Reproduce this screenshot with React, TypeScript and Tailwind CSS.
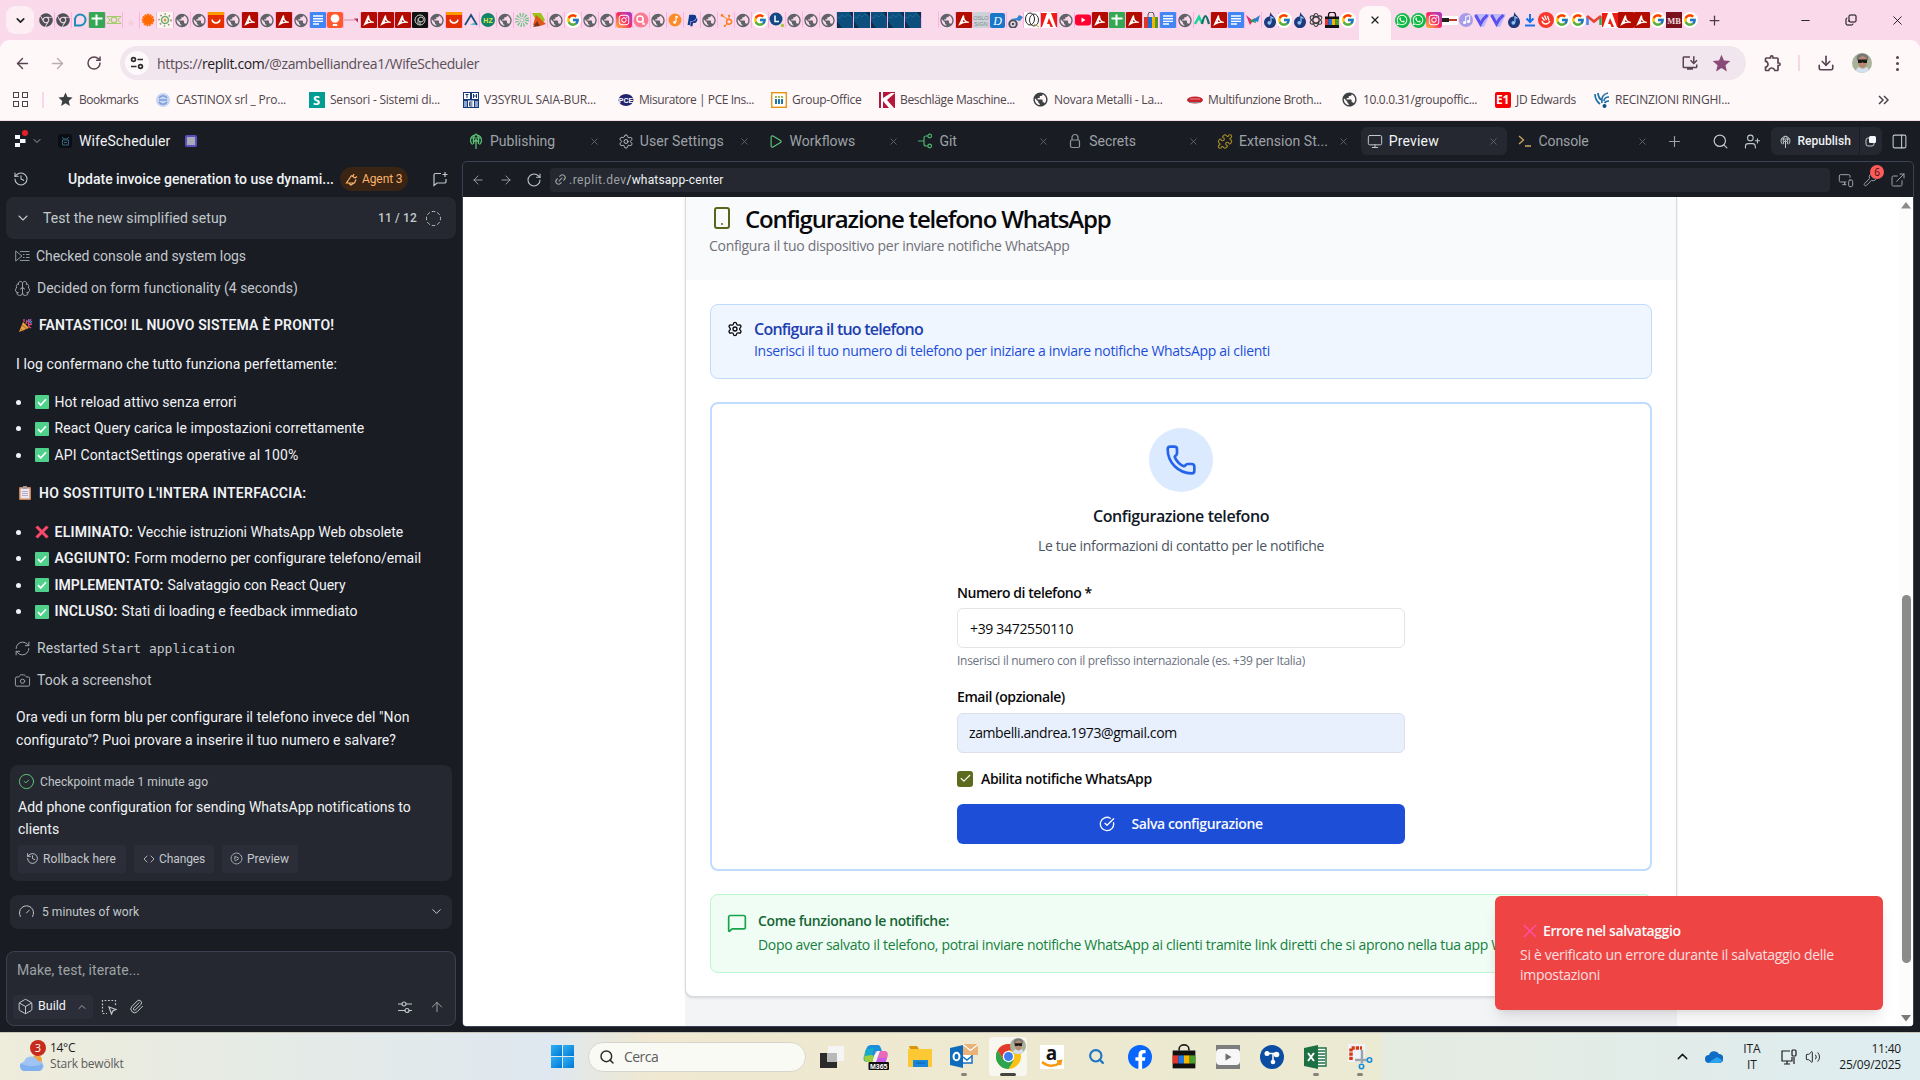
import type { ReactNode } from 'react';
import {
  ArrowLeft, ArrowRight, ArrowUp, Brain, Camera, Check, ChevronDown, ChevronUp, CircleCheckBig, CirclePlay, CircleCheck,
  CircleDashed, Code, Download, ExternalLink, Gauge, History, Link2, MessageSquare,
  Monitor, MonitorSmartphone, MousePointer2, PanelRight, Paperclip, Phone, Play, Plus, Puzzle, RefreshCw, RotateCw,
  Search, Settings, Smartphone, UserPlus, Volume2, Wrench, X, Box, Minus, Copy,
} from 'lucide-react';
import { FcGoogle } from 'react-icons/fc';
import { FaChrome, FaFacebookF, FaHubspot, FaInstagram, FaPaypal, FaWhatsapp } from 'react-icons/fa';
import { MdPublic, MdStar, MdOutlineExtension, MdOutlineInstallDesktop } from 'react-icons/md';

const Svg16 = ({ children }: { children: ReactNode }) => (
  <svg viewBox="0 0 16 16" width="16" height="16" fill="none">{children}</svg>
);

const glyphs: Record<string, ReactNode> = {
  chrome: <FaChrome size={14} color="#4d5156" />,
  globe: <MdPublic size={17} color="#5f6368" />,
  google: <span className="flex size-4 items-center justify-center rounded-full bg-white"><FcGoogle size={14} /></span>,
  pdf: (
    <Svg16>
      <rect width="16" height="16" rx="1" fill="#b30b00" />
      <path d="M3.500 12.500c2.200-1 4-4.500 4-9M7.500 3.500c0 3.500 1.500 6.500 5.300 6.900-3.300-.6-6 0-9.300 2.100z" stroke="#fff" strokeWidth="1.200" />
    </Svg16>
  ),
  docs: (
    <Svg16>
      <rect width="16" height="16" rx="1" fill="#4285f4" />
      <path d="M3 4h10M3 6.700h10M3 9.400h10M3 12h6" stroke="#fff" strokeWidth="1.400" />
    </Svg16>
  ),
  sheet: (
    <Svg16>
      <rect width="16" height="16" rx="1" fill="#34a853" />
      <path d="M7.500 2.500v11M2.500 6.500h11" stroke="#fff" strokeWidth="2" />
    </Svg16>
  ),
  drop: (
    <Svg16>
      <path d="M8 2.500c3.500 0 5.500 2.500 5.500 5.500S11 13.500 8 13.500H3V8c0-3 2-5.500 5-5.500z" stroke="#1b8db8" strokeWidth="2" />
    </Svg16>
  ),
  star6: (
    <Svg16>
      <path d="M1 4.500h14M1 11.500h14M1 4.500l3 3.500-3 3.500M15 4.500L12 8l3 3.500" stroke="#a5cc6b" />
      <circle cx="8" cy="8" r="2.800" stroke="#a5cc6b" strokeWidth="1.300" />
    </Svg16>
  ),
  faint: <Svg16><circle cx="8" cy="11" r="2.500" fill="#f5cfe0" /></Svg16>,
  sun: <Svg16><circle cx="8" cy="8" r="5" fill="#ff6a00" /><circle cx="8" cy="8" r="5.500" stroke="#ff6a00" strokeWidth="1.500" strokeDasharray="2 .7" /></Svg16>,
  virus: (
    <Svg16>
      <rect width="16" height="16" fill="#f7f7f0" />
      <circle cx="8" cy="8" r="3.500" stroke="#7aa877" strokeWidth="1.600" />
      <circle cx="8" cy="8" r="6" stroke="#a0846a" strokeWidth="1.500" strokeDasharray="1.500 3" />
      <circle cx="8" cy="8" r="1.500" fill="#d0a040" />
    </Svg16>
  ),
  ali: (
    <Svg16>
      <rect width="16" height="16" rx="1" fill="#e62e04" />
      <rect width="16" height="3" fill="#ff9a00" />
      <path d="M4 7.500c.8 4.500 7.200 4.500 8 0" stroke="#fff" strokeWidth="1.500" />
    </Svg16>
  ),
  bulb: (
    <Svg16>
      <rect width="16" height="16" rx="2" fill="#ff5a2d" />
      <circle cx="8" cy="6.500" r="4.300" fill="#fff" />
      <path d="M5.800 12h4.400v2H5.800z" fill="#fff" />
    </Svg16>
  ),
  dash: <Svg16><path d="M0 8h11" stroke="#d588a8" /><path d="M10 6.500h4v4z" fill="#a83058" /></Svg16>,
  swirl: (
    <Svg16>
      <rect width="16" height="16" rx="1" fill="#111" />
      <circle cx="8" cy="8" r="5" stroke="#ccc" />
      <circle cx="9" cy="7.500" r="2.500" stroke="#ccc" />
      <path d="M6 12V6.500M8 13V9" stroke="#ccc" />
    </Svg16>
  ),
  mount: <Svg16><path d="M2 13L8 3l6 10" stroke="#1b4f7d" strokeWidth="1.800" /><path d="M7 12.500l4-1.500 3 2z" fill="#2bb0c0" /></Svg16>,
  hz: (
    <Svg16>
      <circle cx="8" cy="8" r="7" fill="#12836b" />
      <text x="8" y="10.500" fontSize="7" fontWeight="700" fill="#dfe94a" textAnchor="middle" fontFamily="Liberation Sans">HZ</text>
    </Svg16>
  ),
  burst: <Svg16><circle cx="8" cy="8" r="5" stroke="#6ec08a" strokeWidth="4" strokeDasharray="1.200 1.400" /><circle cx="8" cy="8" r="2" stroke="#9bd0a8" /></Svg16>,
  fox: <Svg16><path d="M1 1h9l4 7-6 6z" fill="#9ac41c" /><path d="M2 13L5 3l10 9-6 2z" fill="#e2561b" /><path d="M2 15l4-6 3 5z" fill="#7b3714" /></Svg16>,
  insta: (
    <span className="flex size-4 items-center justify-center rounded-[3px] bg-linear-to-tr from-[#ffb02e] via-[#f4245e] to-[#a229d6]">
      <FaInstagram size={12} color="#fff" />
    </span>
  ),
  search: <Svg16><circle cx="8" cy="8" r="7.500" fill="#fc7a91" /><circle cx="7" cy="7" r="3" stroke="#fff" strokeWidth="1.400" /><path d="M10 6v6h2" stroke="#fff" strokeWidth="1.400" /></Svg16>,
  tune: <Svg16><circle cx="8" cy="8" r="6.500" fill="#ff8a2a" /><path d="M9 4v6M9 4l2 1.500" stroke="#fff" strokeWidth="1.200" /><circle cx="7.600" cy="10.300" r="1.500" fill="#fff" /></Svg16>,
  paypal: <FaPaypal size={13} color="#12388f" />,
  hub: <FaHubspot size={13} color="#ff7a1a" />,
  ell: <Svg16><circle cx="7" cy="7" r="6.500" fill="#0f4a86" /><path d="M6 3.500v6h4" stroke="#fff" strokeWidth="1.500" /><circle cx="13.500" cy="13.500" r="1.700" fill="#a6c53a" /></Svg16>,
  blue: (
    <Svg16>
      <rect width="16" height="16" fill="#0c4e7c" />
      <path d="M0 5l3 1 2-3 3 2 3-3 4 3" stroke="#2f80ad" strokeWidth=".5" />
      <path d="M0 16V9l5 7zM16 0v6l-4-6z" fill="#07304f" />
    </Svg16>
  ),
  empty: null,
  oslo: (
    <Svg16>
      <rect width="16" height="16" fill="#cbd3d6" />
      <text x="8" y="7.500" fontSize="5.500" fill="#7d8a90" textAnchor="middle" fontFamily="Liberation Sans">OSLO</text>
      <text x="8" y="13.500" fontSize="5.500" fill="#7d8a90" textAnchor="middle" fontFamily="Liberation Sans">SIGN</text>
    </Svg16>
  ),
  dee: (
    <Svg16>
      <rect width="15" height="15" y="1" rx="2" fill="#1877c9" />
      <text x="7.500" y="13" fontSize="12" fontStyle="italic" fill="#fff" textAnchor="middle" fontFamily="Liberation Serif">D</text>
    </Svg16>
  ),
  bike: <Svg16><circle cx="6" cy="12" r="3.700" stroke="#44525c" strokeWidth="2" /><circle cx="6" cy="12" r="1.300" fill="#44525c" /><path d="M4 7l6-1 2-3 4 2-3 4-5-1z" fill="#2f86cf" /></Svg16>,
  que: <Svg16><rect width="16" height="16" fill="#fff" /><ellipse cx="6" cy="7" rx="4.500" ry="6" stroke="#222" /><ellipse cx="10" cy="8" rx="4.500" ry="6" stroke="#333" /><path d="M10 12l5 3" stroke="#c8a030" /></Svg16>,
  adobe: <Svg16><rect width="16" height="16" rx="1" fill="#fff" /><path d="M0 1h6L1 15H0zM10 1h6v14h-1zM8 6l4 9H9.500L8.300 12H6z" fill="#ee1c12" /></Svg16>,
  yt: <Svg16><rect y="2.500" width="16" height="11" rx="3" fill="#ff0033" /><path d="M6.500 5.500v5l4-2.500z" fill="#fff" /></Svg16>,
  bag: (
    <Svg16>
      <path d="M5 6V3a3 3 0 0 1 6 0v3" stroke="#555" />
      <path d="M1 5h4v11H1z" fill="#d9382a" /><path d="M5 5h4v11H5z" fill="#1f6fd0" /><path d="M9 5h3v11H9z" fill="#f5b400" /><path d="M12 5h3v11h-3z" fill="#4b9b2d" />
    </Svg16>
  ),
  storebag: (
    <Svg16>
      <path d="M4.500 5V3a3.500 3 0 0 1 7 0v2" stroke="#111" strokeWidth="1.300" />
      <path d="M1 4.500h14V16H1z" fill="#111" />
      <path d="M1 7h3.500v6H1z" fill="#e5352b" /><path d="M4.500 7H8v6H4.500z" fill="#1a76e0" /><path d="M8 7h3.500v6H8z" fill="#f5b400" /><path d="M11.500 7H15v6h-3.500z" fill="#4aa02c" />
    </Svg16>
  ),
  emm: <Svg16><path d="M1 12l4-7 3 6" stroke="#16d79a" strokeWidth="2.500" /><path d="M8 12c1-4 2-8 3.500-8S14 9 15 12" stroke="#0f6f62" strokeWidth="2.200" /></Svg16>,
  ribbon: <Svg16><path d="M1 3l4 10 3-4z" fill="#e02a6a" /><path d="M4 9l6-3 1 5z" fill="#2d9b5e" /><path d="M8 8l7-5-2 7z" fill="#2b7bd6" /></Svg16>,
  noteD: (
    <Svg16>
      <path d="M8.500 0C9 3 14 5 14 10a6 5.800 0 1 1-6.500-5.500z" fill="#1e3a7c" />
      <path d="M9 4v6.500M9 4.500l2.500 2" stroke="#8fc4f4" strokeWidth="1.200" />
      <circle cx="7.300" cy="10.800" r="1.900" fill="#8fc4f4" />
    </Svg16>
  ),
  noteP: <Svg16><circle cx="8" cy="8" r="7" fill="#a79ce8" /><circle cx="6.500" cy="10.500" r="1.600" fill="#fff" /><circle cx="10.500" cy="9.500" r="1.600" fill="#fff" /><path d="M7.700 10.500v-6l4-1v6" stroke="#fff" /></Svg16>,
  gpt: (
    <Svg16>
      <g stroke="#3a3a3a" strokeWidth="1.100">
        <ellipse cx="8" cy="8" rx="3" ry="6.500" /><ellipse cx="8" cy="8" rx="3" ry="6.500" transform="rotate(60 8 8)" /><ellipse cx="8" cy="8" rx="3" ry="6.500" transform="rotate(120 8 8)" />
      </g>
    </Svg16>
  ),
  wa: <span className="flex size-[15px] items-center justify-center rounded-full bg-[#10b944]"><FaWhatsapp size={12} color="#fff" /></span>,
  car: <Svg16><rect y="4" width="16" height="9" fill="#fff" /><path d="M0 6h7v4H0z" fill="#222" /><path d="M7 7h8v2H7z" fill="#c0392b" /></Svg16>,
  vee: <Svg16><path d="M0 2h16l-6 13H7z" fill="#bdb9fb" /><path d="M1.500 3l5 9 3-5 4-4" stroke="#5b50ef" strokeWidth="3" /></Svg16>,
  down: <Svg16><path d="M8 2v8M4.500 6.500L8 10l3.500-3.500M3 13.500h10" stroke="#1a73e8" strokeWidth="2" /></Svg16>,
  hand: <Svg16><circle cx="8" cy="8" r="8" fill="#f8382c" /><path d="M4 9c1 4 6 4 8 0M6.500 8.500L4 5M8.500 8L6.500 3.500M11 8.500L9.500 4" stroke="#fff" strokeWidth="1.300" /></Svg16>,
  gmail: <Svg16><path d="M1.500 13V4.500" stroke="#4285f4" strokeWidth="2.500" /><path d="M14.500 13V4.500" stroke="#34a853" strokeWidth="2.500" /><path d="M1 4l7 5.500L15 4" stroke="#ea4335" strokeWidth="2.800" /></Svg16>,
  mb: (
    <Svg16>
      <rect width="16" height="16" fill="#7a0f1e" />
      <text x="8" y="11.500" fontSize="8.500" fontWeight="700" fill="#f0dfe0" textAnchor="middle" fontFamily="Liberation Serif">MB</text>
    </Svg16>
  ),
};

const tabsWide =
  'chrome chrome drop sheet star6 faint sun virus globe globe ali globe pdf globe pdf globe docs bulb dash pdf pdf pdf swirl globe ali mount hz globe burst fox globe google globe globe insta search globe tune paypal globe hub globe google ell globe globe globe blue blue blue blue blue empty globe pdf oslo dee bike que adobe globe yt pdf sheet pdf bag docs globe emm pdf docs ribbon noteD'.split(' ');
const tabsMid = 'google noteD gpt storebag google'.split(' ');
const tabsEnd = 'wa wa insta car noteP vee vee noteD down hand google google gmail adobe pdf pdf google mb google'.split(' ');

function TabStrip() {
  return (
    <div className="flex h-10 items-center bg-[#fad9ea]">
      <div className="ml-[6px] flex h-7 w-7 items-center justify-center rounded-[9px] bg-[#fdeef4]">
        <ChevronDown size={13} strokeWidth={3} color="#222" />
      </div>
      <div className="ml-1 flex">
        {tabsWide.map((k, i) => (
          <span key={i} className="flex h-4 w-[17px] items-center justify-center border-r border-[#ffb1e4]">{glyphs[k]}</span>
        ))}
      </div>
      <div className="-ml-[3px] flex">
        {tabsMid.map((k, i) => (
          <span key={i} className="flex h-4 w-4 items-center justify-center">{glyphs[k]}</span>
        ))}
      </div>
      <div className="ml-[3px] flex h-[34px] w-8 items-center justify-center self-end rounded-t-[9px] bg-[#fef8f9] pb-[6px]">
        <X size={12} strokeWidth={2.500} color="#222" />
      </div>
      <div className="ml-[3px] flex">
        {tabsEnd.map((k, i) => (
          <span key={i} className="flex h-4 w-4 items-center justify-center">{glyphs[k]}</span>
        ))}
      </div>
      <Plus size={15} className="ml-[9px]" color="#4a3a44" />
      <div className="ml-auto flex items-center gap-[33px] pr-[15px] text-black">
        <Minus size={13} strokeWidth={1.500} />
        <Copy size={12} strokeWidth={2} className="-scale-x-100 -scale-y-100 rotate-90" />
        <X size={15} strokeWidth={1.300} />
      </div>
    </div>
  );
}

function Avatar({ className }: { className: string }) {
  return (
    <svg viewBox="0 0 20 20" className={className}>
      <defs><clipPath id="face"><circle cx="10" cy="10" r="10" /></clipPath></defs>
      <g clipPath="url(#face)">
        <rect width="20" height="20" fill="#a9b39a" />
        <ellipse cx="10.500" cy="5" rx="6" ry="4.500" fill="#77777a" />
        <ellipse cx="10.500" cy="9" rx="4.500" ry="6" fill="#b98a72" />
        <path d="M6 6.500h9V10H11.500L10.500 9 9.500 10H6z" fill="#1a1a1c" />
        <path d="M2 20l4-6 5 2 4-2 4 6z" fill="#d5e0ee" />
      </g>
    </svg>
  );
}

function AddressBar() {
  return (
    <div className="flex h-[46px] items-center bg-[#fad9ea]">
      <div className="flex h-[46px] w-full items-center rounded-t-[9px] bg-[#fef8f9] text-[#5a4351]">
        <ArrowLeft size={17} className="ml-[14px]" />
        <ArrowRight size={17} className="ml-[18px] text-[#b9aeb4]" />
        <RotateCw size={16} strokeWidth={2.200} className="ml-[20px]" />
        <div className="ml-[18px] flex h-[34px] w-[1626px] items-center rounded-full bg-[#f1e5ee] pr-[14px] pl-[5px]">
          <span className="flex size-6 items-center justify-center rounded-full bg-[#fdf8fa]">
            <svg width="14" height="14" viewBox="0 0 14 14" fill="none" stroke="#2e2a2d" strokeWidth="1.700">
              <circle cx="3.500" cy="3.500" r="1.900" /><path d="M7.500 3.500H13M1 10.500h5.500" /><circle cx="10.500" cy="10.500" r="1.900" />
            </svg>
          </span>
          <span className="ml-2 font-['Open_Sans'] text-[14px] tracking-[-0.350px] text-[#5b4f57]">
            https://<span className="text-[#1d1b1d]">replit.com</span>/@zambelliandrea1/WifeScheduler
          </span>
          <MdOutlineInstallDesktop size={18} className="ml-auto" />
          <MdStar size={21} className="ml-[12px] text-[#894a78]" />
        </div>
        <MdOutlineExtension size={20} className="ml-[17px]" />
        <span className="ml-[15px] h-4 w-[2px] bg-[#fad5e8]" />
        <Download size={18} strokeWidth={2.200} className="ml-[17px]" />
        <Avatar className="ml-[17px] size-5" />
        <span className="ml-[24px] flex flex-col gap-[3px]">
          <i className="size-[3px] rounded-full bg-[#5a4351]" /><i className="size-[3px] rounded-full bg-[#5a4351]" /><i className="size-[3px] rounded-full bg-[#5a4351]" />
        </span>
      </div>
    </div>
  );
}

const bookmarks: { t: string; w: string; k: string; icon: ReactNode }[] = [
  { t: 'Bookmarks', w: 'w-[97px]', k: 'tracking-[-0.450px]', icon: <MdStar size={17} color="#3c4043" /> },
  { t: 'CASTINOX srl _ Pro...', w: 'w-[154px]', k: 'tracking-[-0.190px]', icon: <Svg16><circle cx="8" cy="8" r="7" fill="#c7d6f2" /><path d="M4 6c2-3 6-3 8 0M4 10c2 3 6 3 8 0M4 8h8" stroke="#7c9bd8" strokeWidth="1.500" /></Svg16> },
  { t: 'Sensori - Sistemi di...', w: 'w-[154px]', k: 'tracking-[-0.220px]', icon: <span className="flex size-4 items-center justify-center bg-[#009d92] font-['Open_Sans'] text-[13px] leading-4 font-bold text-white">S</span> },
  { t: 'V3SYRUL SAIA-BUR...', w: 'w-[155px]', k: 'tracking-[-0.170px]', icon: <Svg16><rect width="16" height="16" fill="#163a78" /><path d="M1 1h6v6H1zM9 1h6v6H9zM5 8.500h6V15H5z" fill="#fff" /><path d="M2.500 2.500h3M4 2.500V6M10.500 2v4M13.500 2v4M10.500 4h3M6.500 10h3M6.500 12h3M6.500 14h3M6.700 10v4" stroke="#163a78" /><path d="M1 9h3v6H1zM12 9h3v6h-3z" fill="#8aa7d4" /></Svg16> },
  { t: 'Misuratore | PCE Ins...', w: 'w-[153px]', k: 'tracking-[-0.430px]', icon: <Svg16><ellipse cx="8" cy="8" rx="7.500" ry="6" fill="#23246e" /><text x="8" y="10.500" fontSize="7" fontWeight="700" fill="#fff" textAnchor="middle" fontFamily="Liberation Sans">PCE</text></Svg16> },
  { t: 'Group-Office', w: 'w-[108px]', k: 'tracking-[-0.240px]', icon: <Svg16><rect x=".7" y=".7" width="14.600" height="14.600" fill="#fff" stroke="#e79414" strokeWidth="1.400" /><path d="M5 7v5M8 7v5M11 7v5" stroke="#1e7aa8" strokeWidth="2" /><path d="M4 5h2M7 5h2M10 5h2" stroke="#7a9b2a" strokeWidth="1.500" /></Svg16> },
  { t: 'Beschläge Maschine...', w: 'w-[154px]', k: 'tracking-[-0.350px]', icon: <Svg16><rect width="16" height="16" fill="#b7173a" /><path d="M4 0v6l8-5h4L8 8l7 8h-5L4 9v7H2V0z" fill="#fff" /></Svg16> },
  { t: 'Novara Metalli - La...', w: 'w-[154px]', k: 'tracking-[-0.230px]', icon: <MdPublic size={17} color="#3c4043" /> },
  { t: 'Multifunzione Broth...', w: 'w-[155px]', k: 'tracking-[-0.350px]', icon: <Svg16><ellipse cx="8" cy="8" rx="8" ry="3.500" fill="#c9202c" /><path d="M2 10.500h12" stroke="#8a8a8a" /><path d="M3 7h10" stroke="#e98a90" /></Svg16> },
  { t: '10.0.0.31/groupoffic...', w: 'w-[153px]', k: 'tracking-[-0.340px]', icon: <MdPublic size={17} color="#3c4043" /> },
  { t: 'JD Edwards', w: 'w-[99px]', k: 'tracking-[-0.300px]', icon: <span className="flex size-4 items-center justify-center rounded-[2px] bg-[#f80000] font-['Open_Sans'] text-[12px] leading-4 font-bold tracking-tight text-white">E1</span> },
  { t: 'RECINZIONI RINGHI...', w: 'w-[150px]', k: 'tracking-[-0.210px]', icon: <Svg16><path d="M1 2c0 4 1 7 5 10M4 1c0 3 1 5 3 7M14 1c-5 1-7 5-6 10M15 5c-3 0-5 2-5 4M15 9c-3 0-4 1-4.500 2" stroke="#1f6fa8" strokeWidth="1.700" /><circle cx="10.500" cy="14" r="2" fill="#14507f" /></Svg16> },
];

function BookmarksBar() {
  return (
    <div className="flex h-[35px] items-center border-b-[1px] border-[#f3dde6] bg-[#fef8f9] pb-[7px] font-['Open_Sans'] text-[12px] text-[#4f454b]">
      <span className="ml-[13px] grid grid-cols-2 gap-[3px]">
        {[0, 1, 2, 3].map((i) => <i key={i} className="size-[6px] border-[1.500px] border-[#4a454a]" />)}
      </span>
      <span className="ml-[14px] h-4 w-[2px] bg-[#fbd5e9]" />
      <div className="ml-[13px] flex">
        {bookmarks.map((b) => (
          <div key={b.t} className={`flex shrink-0 items-center whitespace-nowrap ${b.w}`}>
            <span className="flex w-[17px] shrink-0 justify-center">{b.icon}</span>
            <span className={`ml-[5px] ${b.k}`}>{b.t}</span>
          </div>
        ))}
      </div>
      <svg className="mr-[31px] ml-auto" width="11" height="10" viewBox="0 0 11 10" fill="none" stroke="#4a454a" strokeWidth="1.500"><path d="M1 1l4 4-4 4M6 1l4 4-4 4" /></svg>
    </div>
  );
}

const Globe = ({ size, color }: { size: number; color: string }) => (
  <svg width={size} height={size} viewBox="0 0 16 16" fill="none" stroke={color} strokeWidth="1.200">
    <path d="M4.500 11.500A5.500 5.500 0 1 1 11.500 11.500M5.800 11C4.500 7 5.500 2.500 8 1c2.500 1.500 3.500 6 2.200 10M8 6.500V16M5.500 9L8 6.500 10.500 9M2.800 5h10.400" />
  </svg>
);

const tabs: { t: string; k: string; on?: boolean; icon: ReactNode }[] = [
  { t: 'Publishing', k: '', icon: <Globe size={16} color="#5dc777" /> },
  { t: 'User Settings', k: 'tracking-[0.070px]', icon: <Settings size={17} strokeWidth={1.400} color="#c2c8cc" /> },
  { t: 'Workflows', k: '', icon: <Play size={15} strokeWidth={1.800} color="#5dc777" /> },
  { t: 'Git', k: '', icon: <Svg16><g stroke="#4bb56c" strokeWidth="1.200"><path d="M1 8h6M11 3H9a2 2 0 0 0-2 2v6a2 2 0 0 0 2 2h2" /><circle cx="12.700" cy="3" r="1.800" /><circle cx="12.700" cy="13" r="1.800" /></g></Svg16> },
  { t: 'Secrets', k: '', icon: <svg width="12" height="16" viewBox="0 0 12 16" fill="none" stroke="#8f959b" strokeWidth="1.200"><rect x="1.500" y="7" width="9" height="7.500" rx="1.500" /><path d="M3 7V4.500a3 3 0 0 1 6 0V7" /></svg> },
  { t: 'Extension St...', k: 'tracking-[0.040px]', icon: <Puzzle size={17} strokeWidth={1.600} color="#a98d24" /> },
  { t: 'Preview', k: 'tracking-[0.160px]', on: true, icon: <Monitor size={17} strokeWidth={1.500} color="#c2c8cc" /> },
  { t: 'Console', k: 'tracking-[-0.120px]', icon: <Svg16><path d="M2 3l4.500 4L2 11M8 13h6" stroke="#c9a961" strokeWidth="1.300" /></Svg16> },
];

function WorkspaceHeader() {
  return (
    <div className="flex h-10 items-center text-[14px] text-[#9da2a6]">
      <div className="flex w-[462px] items-center">
        <div className="relative ml-[15px] h-[14px] w-3">
          <svg width="12" height="14" viewBox="0 0 12 14" fill="#f5f9fc"><path d="M0 1h5v4H0zM5 5h5.500v4H5zM0 9h5v4H0z" /></svg>
          <i className="absolute -top-[4px] left-[7px] size-[6px] rounded-full bg-[#e5202b]" />
        </div>
        <ChevronDown size={12} className="ml-[4px]" />
        <span className="ml-[15px] flex size-[14px] items-center justify-center rounded-[3px] bg-[#0a0e14]">
          <svg width="9" height="10" viewBox="0 0 9 10" fill="none" stroke="#35647c"><path d="M1 1l2 2h3l2-2M1.500 4h6v5h-6zM3 6.500h3" /></svg>
        </span>
        <span className="ml-[7px] tracking-[0.120px] text-[#f0f3f5]">WifeScheduler</span>
        <span className="ml-[15px] size-3 rounded-[2px] border-2 border-[#5b4fc0] bg-[#a9aab5]" />
      </div>
      <div className="flex gap-1">
        {tabs.map((x) => (
          <div key={x.t} className={`flex h-7 w-[145.800px] items-center rounded-md pl-[6px] ${x.on ? 'bg-[#252830] text-[#f3f5f6]' : ''}`}>
            <span className="flex w-4 shrink-0 justify-center">{x.icon}</span>
            <span className={`ml-[6px] ${x.k}`}>{x.t}</span>
            <X size={11} strokeWidth={1.700} className="mr-[8px] ml-auto text-[#6b7078]" />
          </div>
        ))}
      </div>
      <Plus size={17} strokeWidth={1.600} className="ml-[10px]" />
      <Search size={17} strokeWidth={1.700} className="ml-[29px] text-[#c2c8cc]" />
      <UserPlus size={17} strokeWidth={1.500} className="ml-[15px] text-[#c2c8cc]" />
      <div className="ml-[10px] flex gap-px text-[12px] font-medium text-[#f0f3f5]">
        <span className="flex h-7 w-[88px] items-center rounded-l-md bg-[#252830] pl-[8px]">
          <Globe size={13} color="#c2c8cc" /><span className="ml-[5px] tracking-[0.040px]">Republish</span>
        </span>
        <span className="flex h-7 w-[22px] items-center justify-center rounded-r-md bg-[#252830]">
          <svg width="12" height="12" viewBox="0 0 12 12"><rect x="1" y="3" width="8" height="8" rx="2" fill="none" stroke="#c2c8cc" /><rect x="4" y="1" width="7" height="7" rx="1.500" fill="#f5f9fc" /></svg>
        </span>
      </div>
      <PanelRight size={17} strokeWidth={1.500} className="ml-[9px] text-[#c2c8cc]" />
    </div>
  );
}

const CheckEmoji = () => (
  <svg width="14" height="14" viewBox="0 0 14 14" className="mr-[6px] shrink-0"><rect width="14" height="14" rx="1" fill="#4fd18b" /><path d="M3 7.200l2.700 2.900L11 4.300" fill="none" stroke="#fff" strokeWidth="1.700" /></svg>
);
const CrossEmoji = () => (
  <svg width="14" height="14" viewBox="0 0 14 14" className="mr-[6px] shrink-0"><path d="M1.500 1.500l11 11M12.500 1.500l-11 11" stroke="#f8496c" strokeWidth="3" /></svg>
);

const Bullet = ({ children }: { children: ReactNode }) => (
  <li className="flex h-[26.500px] items-center whitespace-nowrap">
    <i className="mr-[13.500px] ml-[16px] size-[5px] rounded-full bg-[#f0f3f5]" />
    {children}
  </li>
);

const smallBtn = 'flex h-7 items-center rounded bg-[#2b2d38] text-[12px] text-[#c2c8cc]';

function ChatPane() {
  return (
    <div className="flex w-[462px] flex-col text-[14px] text-[#f0f3f5]">
      <div className="flex h-9 shrink-0 items-center">
        <History size={16} strokeWidth={1.600} className="ml-[13px] text-[#c2c8cc]" />
        <span className="ml-[39px] w-[272px] font-medium whitespace-nowrap">Update invoice generation to use dynami...</span>
        <span className="flex h-6 w-[68px] items-center rounded-full bg-[#3a2413] pl-[5px] text-[12px] text-[#fbb36b]">
          <svg width="13" height="13" viewBox="0 0 13 13" fill="none" stroke="#fbb36b" strokeWidth="1.200" className="mr-[4px]"><path d="M6.500 2.500L1.500 10h8l1.500-3.500M6.500 2.500L10 5M9 1l-1 2M12 3.500L10 5M4 10.500l2 1.500 3-2" /></svg>
          <span className="tracking-[-0.100px]">Agent 3</span>
        </span>
        <svg width="16" height="16" viewBox="0 0 16 16" fill="none" stroke="#c2c8cc" strokeWidth="1.200" className="ml-[24px]"><path d="M9 2.500H3.500A1.500 1.500 0 0 0 2 4v10.500L5 12h7.500a1.500 1.500 0 0 0 1.500-1.500V8M13 1v5M10.500 3.500h5" /></svg>
      </div>
      <div className="ml-[6px] flex h-[42px] w-[450px] shrink-0 items-center rounded-lg bg-[#252830] text-[#c2c8cc]">
        <ChevronDown size={16} strokeWidth={1.600} className="ml-[9px]" />
        <span className="ml-[12px] tracking-[0.050px]">Test the new simplified setup</span>
        <span className="ml-auto text-[12px] font-medium tracking-[0.150px]">11 / 12</span>
        <CircleDashed size={17} strokeWidth={1.300} className="mr-[14px] ml-[8px]" />
      </div>
      <div className="flex h-[34px] items-center text-[#c2c8cc]">
        <svg width="15" height="12" viewBox="0 0 15 12" fill="none" stroke="#8f959b" className="ml-[15px]"><path d="M.7 1v10L7 6zM5 1.500h9.500M8 4.500h1.500M11 4.500h3.500M8 7.500h1.500M11 7.500h3.500M5 10.500h9.500" /></svg>
        <span className="ml-[6px] tracking-[-0.060px]">Checked console and system logs</span>
      </div>
      <div className="flex h-[31px] items-center text-[#c2c8cc]">
        <Brain size={17} strokeWidth={1.400} className="ml-[14px] text-[#9da2a6]" />
        <span className="ml-[6px]">Decided on form functionality (4 seconds)</span>
      </div>
      <div className="flex h-[42px] items-center font-semibold">
        <svg width="14" height="15" viewBox="0 0 14 15" className="mr-[6px] ml-[19px]"><path d="M0 14L4 4l6 6z" fill="#e8a33c" /><path d="M1.500 11l3 2M3 7l5 4" stroke="#b05a2a" /><path d="M5 1v3M8 2l-1 4M12 1l-3 5M13 6l-4 1M12 10l-3-2" stroke="#e54b7a" strokeWidth="1.300" /><path d="M10 1l-1 3M13 3l-2 2" stroke="#3f8bea" strokeWidth="1.300" /></svg>
        <span className="tracking-[0.160px]">FANTASTICO! IL NUOVO SISTEMA È PRONTO!</span>
      </div>
      <p className="ml-4 h-9 leading-9 tracking-[0.080px]">I log confermano che tutto funziona perfettamente:</p>
      <ul className="mt-[7px]">
        <Bullet><CheckEmoji /><span className="tracking-[0.060px]">Hot reload attivo senza errori</span></Bullet>
        <Bullet><CheckEmoji /><span className="tracking-[0.060px]">React Query carica le impostazioni correttamente</span></Bullet>
        <Bullet><CheckEmoji /><span className="tracking-[0.160px]">API ContactSettings operative al 100%</span></Bullet>
      </ul>
      <div className="flex h-[49px] items-center font-semibold">
        <svg width="12" height="14" viewBox="0 0 12 14" className="mr-[8px] ml-[19px]"><rect y="1" width="12" height="13" rx="1" fill="#c98455" /><path d="M1.500 2.500h9v10h-9z" fill="#ece6f2" /><path d="M4 0h4v3H4z" fill="#9d9aa6" /><path d="M3 5.500h6M3 7.500h6M3 9.500h6" stroke="#a39fb2" strokeWidth=".8" /></svg>
        <span className="tracking-[0.280px]">HO SOSTITUITO L'INTERA INTERFACCIA:</span>
      </div>
      <ul className="mt-[1.500px]">
        <Bullet><CrossEmoji /><b className="font-semibold tracking-[0.250px]">ELIMINATO:</b><span className="ml-[4px]">Vecchie istruzioni WhatsApp Web obsolete</span></Bullet>
        <Bullet><CheckEmoji /><b className="font-semibold tracking-[0.280px]">AGGIUNTO:</b><span className="ml-[4px] tracking-[0.050px]">Form moderno per configurare telefono/email</span></Bullet>
        <Bullet><CheckEmoji /><b className="font-semibold">IMPLEMENTATO:</b><span className="ml-[4px]">Salvataggio con React Query</span></Bullet>
        <Bullet><CheckEmoji /><b className="font-semibold tracking-[0.180px]">INCLUSO:</b><span className="ml-[4px] tracking-[0.040px]">Stati di loading e feedback immediato</span></Bullet>
      </ul>
      <div className="mt-[7.500px] flex h-8 items-center text-[#c2c8cc]">
        <RefreshCw size={17} strokeWidth={1.400} className="ml-[14px] text-[#9da2a6]" />
        <span className="ml-[6px] tracking-[0.060px]">Restarted</span>
        <span className="ml-[4px] font-['DejaVu_Sans_Mono'] text-[13px]">Start application</span>
      </div>
      <div className="flex h-8 items-center text-[#c2c8cc]">
        <Camera size={17} strokeWidth={1.400} className="ml-[14px] text-[#9da2a6]" />
        <span className="ml-[6px]">Took a screenshot</span>
      </div>
      <p className="mt-[9px] ml-4 leading-[23px] whitespace-nowrap">
        <span className="tracking-[0.090px]">Ora vedi un form blu per configurare il telefono invece del "Non</span><br />
        <span className="tracking-[0.090px]">configurato"? Puoi provare a inserire il tuo numero e salvare?</span>
      </p>
      <div className="mt-[13px] ml-[10px] h-[116px] w-[442px] shrink-0 rounded-lg bg-[#252830] px-2">
        <div className="flex h-[31px] items-center pt-[3px] text-[12px] text-[#c2c8cc]">
          <CircleCheck size={17} strokeWidth={1.400} className="text-[#5dc777]" />
          <span className="ml-[5px] tracking-[0.070px]">Checkpoint made 1 minute ago</span>
        </div>
        <p className="leading-[22px] tracking-[0.010px]">Add phone configuration for sending WhatsApp notifications to<br />clients</p>
        <div className="mt-[5px] flex gap-2">
          <span className={`${smallBtn} w-[108px]`}><History size={13} strokeWidth={1.700} className="mr-[4px] ml-[8px]" /><span className="tracking-[0.080px]">Rollback here</span></span>
          <span className={`${smallBtn} w-[80px]`}><Code size={12} strokeWidth={1.700} className="mr-[4px] ml-[9px]" /><span className="tracking-[-0.100px]">Changes</span></span>
          <span className={`${smallBtn} w-[76px]`}><CirclePlay size={13} strokeWidth={1.700} strokeDasharray="3 2" className="mr-[4px] ml-[8px]" />Preview</span>
        </div>
      </div>
      <div className="mt-[14px] ml-[10px] flex h-[34px] w-[442px] shrink-0 items-center rounded-lg bg-[#252830] text-[12px] text-[#c2c8cc]">
        <Gauge size={17} strokeWidth={1.400} className="ml-[8px]" />
        <span className="ml-[7px] tracking-[0.070px]">5 minutes of work</span>
        <ChevronDown size={15} strokeWidth={1.600} className="mr-[8px] ml-auto" />
      </div>
      <div className="mt-[22px] ml-[6px] flex h-[75px] w-[450px] shrink-0 flex-col rounded-lg border border-[#3c3f4f] bg-[#252830] text-[#9da2a6]">
        <span className="mt-[9px] ml-[10px] leading-[18px] tracking-[0.090px]">Make, test, iterate...</span>
        <div className="mt-[16px] flex h-6 items-center">
          <span className="ml-[6px] flex h-6 w-20 items-center rounded bg-[#2b2d38] text-[12.500px] text-[#f0f3f5]">
            <Box size={17} strokeWidth={1.400} className="mr-[4px] ml-[4px] text-[#c2c8cc]" />Build
            <ChevronUp size={12} className="mr-[5px] ml-auto text-[#9da2a6]" />
          </span>
          <svg width="16" height="16" viewBox="0 0 16 16" fill="none" stroke="#c2c8cc" strokeWidth="1.200" className="ml-[8px]">
            <path d="M14.500 6V1.500h-13v13H6" strokeDasharray="1.800 1.600" /><path d="M8 8l7 2.500-3 1.300L10.500 15z" />
          </svg>
          <Paperclip size={15} strokeWidth={1.600} className="ml-[12px] text-[#c2c8cc]" />
          <svg width="16" height="14" viewBox="0 0 16 14" fill="none" stroke="#c2c8cc" strokeWidth="1.200" className="ml-auto"><path d="M1 4h4M9 4h6M1 10.500h7M12 10.500h3" /><circle cx="7" cy="4" r="2" /><circle cx="10" cy="10.500" r="2" /></svg>
          <ArrowUp size={16} strokeWidth={1.500} className="mr-[10px] ml-[16px]" />
        </div>
      </div>
    </div>
  );
}

function PreviewBar() {
  return (
    <div className="flex h-[35px] items-center text-[12px] text-[#9da2a6]">
      <ArrowLeft size={14} strokeWidth={1.600} className="ml-[8px]" />
      <ArrowRight size={14} strokeWidth={1.600} className="ml-[14px]" />
      <RotateCw size={16} strokeWidth={1.600} className="ml-[13px] text-[#c2c8cc]" />
      <div className="ml-[8px] flex h-6 w-[1280px] items-center rounded bg-[#252830] pl-[4px]">
        <Link2 size={13} className="mr-[2px] -rotate-45" />
        <span className="tracking-[0.500px]">.replit.dev</span><span className="tracking-[0.180px] text-[#f0f3f5]">/whatsapp-center</span>
      </div>
      <MonitorSmartphone size={16} strokeWidth={1.500} className="ml-[8px]" />
      <span className="relative ml-[9px]">
        <Wrench size={15} strokeWidth={1.600} />
        <i className="absolute -top-[7px] left-[7px] size-[14px] rounded-full bg-[#ff5b5b] text-center font-['Open_Sans'] text-[10px] leading-[14px] text-[#3c0d0d] not-italic">6</i>
      </span>
      <ExternalLink size={16} strokeWidth={1.500} className="ml-[12px]" />
    </div>
  );
}

function PhoneForm() {
  return (
    <div className="mt-[23px] flex h-[469px] flex-col items-center rounded-lg border-2 border-[#bfdbfe]">
      <span className="mt-6 flex size-16 items-center justify-center rounded-full bg-[#dbeafe]"><Phone size={32} color="#2563eb" /></span>
      <h3 className="mt-[12px] text-[16px] leading-6 font-semibold tracking-[-0.420px] text-[#111827]">Configurazione telefono</h3>
      <p className="mt-[8px] tracking-[-0.330px] text-[#4b5563]">Le tue informazioni di contatto per le notifiche</p>
      <div className="mt-[27px] flex w-[448px] flex-col text-[#09090b]">
        <label className="font-semibold tracking-[-0.450px]">Numero di telefono *</label>
        <div className="mt-[5px] flex h-10 items-center rounded-md border border-[#e4e4e7] px-3 pt-px tracking-[-0.320px]">+39 3472550110</div>
        <p className="mt-[5px] text-[12px] leading-4 tracking-[-0.280px] text-[#6b7280]">Inserisci il numero con il prefisso internazionale (es. +39 per Italia)</p>
        <label className="mt-[18px] font-semibold tracking-[-0.420px]">Email (opzionale)</label>
        <div className="mt-[5.500px] flex h-10 items-center rounded-md border border-[#dcdfea] bg-[#e8f0fe] px-[11px] tracking-[-0.400px]">zambelli.andrea.1973@gmail.com</div>
        <div className="mt-[16px] flex items-center">
          <span className="flex size-4 items-center justify-center rounded-[3px] bg-[#5c6b1e]"><Check size={13} color="#fff" /></span>
          <span className="ml-2 font-semibold tracking-[-0.340px]">Abilita notifiche WhatsApp</span>
        </div>
        <button className="mt-[15px] flex h-10 items-center justify-center rounded-md bg-[#1d4ed8] font-semibold tracking-[-0.400px] text-[#f8fafc]">
          <CircleCheckBig size={16} className="mr-4" />Salva configurazione
        </button>
      </div>
    </div>
  );
}

function Toast() {
  return (
    <div className="absolute top-[699px] left-[1032px] h-[114px] w-[388px] rounded-md bg-[#ef4444] pt-[25px] pl-[25px] text-[#fafafa] shadow-lg">
      <div className="flex items-center font-semibold tracking-[-0.420px]">
        <svg width="14" height="14" viewBox="0 0 14 14" className="mr-[6px] ml-[3px]"><path d="M1 1l12 12M13 1L1 13" stroke="#fb4f9c" strokeWidth="1.700" /></svg>
        Errore nel salvataggio
      </div>
      <p className="mt-[4px] tracking-[-0.300px] opacity-85">Si è verificato un errore durante il salvataggio delle<br />impostazioni</p>
    </div>
  );
}

function PreviewPage() {
  return (
    <div className="relative h-[829px] overflow-hidden rounded-b-[3px] bg-white font-['Open_Sans'] text-[14px] leading-5">
      <div className="ml-[222px] h-[829px] w-[992px] bg-[#f3f4f6]">
        <div className="h-[800px] rounded-b-lg border border-t-0 border-[#d8dae0] bg-white shadow-sm">
          <div className="h-[83px] bg-[#f9fafb] px-6 pt-[6px]">
            <div className="flex h-8 items-center">
              <Smartphone size={24} strokeWidth={2} color="#57661a" className="mt-[-2px] mr-[11px]" />
              <h2 className="text-[24px] leading-8 font-semibold tracking-[-1.190px] text-[#09090b]">Configurazione telefono WhatsApp</h2>
            </div>
            <p className="mt-px -ml-px tracking-[-0.300px] text-[#71717a]">Configura il tuo dispositivo per inviare notifiche WhatsApp</p>
          </div>
          <div className="px-6 pt-6">
            <div className="flex h-[75px] rounded-lg border border-[#bfdbfe] bg-[#eff6ff] pt-[14px] pl-4">
              <Settings size={16} className="mt-[2px]" color="#09090b" />
              <div className="ml-[11px]">
                <div className="text-[16px] font-semibold tracking-[-0.760px] text-[#1e40af]">Configura il tuo telefono</div>
                <p className="mt-[2px] tracking-[-0.310px] text-[#1d4ed8]">Inserisci il tuo numero di telefono per iniziare a inviare notifiche WhatsApp ai clienti</p>
              </div>
            </div>
            <PhoneForm />
            <div className="mt-[23px] flex h-[79px] rounded-lg border border-[#bbf7d0] bg-[#f0fdf4] pt-[16px] pl-4">
              <MessageSquare size={20} color="#16a34a" className="mt-[2px]" />
              <div className="ml-[11px] whitespace-nowrap">
                <div className="font-semibold tracking-[-0.370px] text-[#166534]">Come funzionano le notifiche:</div>
                <p className="mt-[4px] tracking-[-0.320px] text-[#15803d]">Dopo aver salvato il telefono, potrai inviare notifiche WhatsApp ai clienti tramite link diretti che si aprono nella tua app WhatsApp</p>
              </div>
            </div>
          </div>
        </div>
      </div>
      <div className="absolute top-0 right-0 flex h-full w-[14px] flex-col items-center bg-[#fcfcfc]">
        <svg width="10" height="8" viewBox="0 0 10 8" className="mt-[4px]"><path d="M5 1l5 6.500H0z" fill="#8b8b8b" /></svg>
        <i className="mt-[386px] h-[368px] w-[9px] rounded-full bg-[#8b8b8b]" />
        <svg width="10" height="8" viewBox="0 0 10 8" className="mt-auto mb-[4px]"><path d="M5 7.500L0 1h10z" fill="#7a7a7a" /></svg>
      </div>
      <Toast />
    </div>
  );
}

const dockApps: { dot?: string; icon: ReactNode }[] = [
  { icon: <svg width="24" height="24" viewBox="0 0 24 24"><path d="M8 1h16v15H8z" fill="#f5f5f5" /><path d="M0 8h17v15H0z" fill="#2b2b2b" /><path d="M7 8h10v9H7z" fill="#b9b9b9" /></svg> },
  { icon: <svg width="26" height="26" viewBox="0 0 26 26"><path d="M8 1h7c2 0 3 3 4 6h-6L9 18H5c-5 0-5-3-3.500-8C3 5 4 1 8 1z" fill="#1b8fdc" /><path d="M2 9l5-1 4 5-2 5H5c-4 0-4.500-3-3-9z" fill="#9bcf3c" /><path d="M3 5l8-1-2 7-7 1z" fill="#19a9c9" /><path d="M13 7h8c4 0 4 3 3 7l-1.500 5H10z" fill="#c95be8" /><path d="M17 7h4c4 0 4 3 3 7h-9z" fill="#e86ab8" /><path d="M11 12l3-5h3l-4 11h-3z" fill="#f7f3ea" /><rect x="5.500" y="18" width="20.500" height="8" rx="1" fill="#111" /><text x="15.700" y="24.500" fontSize="7" fontWeight="700" fill="#fff" textAnchor="middle" fontFamily="Liberation Sans">M365</text></svg> },
  { icon: <svg width="25" height="22" viewBox="0 0 25 22"><path d="M1 0h8l2 3h-9z" fill="#d9950a" /><path d="M0 3h24v18H0z" fill="#fcc934" /><path d="M5 14h15v7H5z" fill="#1a86d9" /><path d="M8 17h9" stroke="#0b5ea8" /></svg> },
  { dot: 'w-[6px] bg-[#84847c]', icon: <svg width="28" height="25" viewBox="0 0 28 25"><path d="M12 8h10v11H12z" fill="#fff" stroke="#1470c4" strokeWidth="1.500" /><path d="M13 13l4 3 5-4" stroke="#1470c4" strokeWidth="1.500" fill="none" /><path d="M0 4l13-3v23L0 21z" fill="#0f6cbd" /><ellipse cx="6.500" cy="12.500" rx="3" ry="3.700" fill="none" stroke="#fff" strokeWidth="2" /><path d="M13 0h15v11H13z" fill="#e9b377" /><path d="M13 .500l7.500 6L28 .500" stroke="#fff" strokeWidth="1.200" fill="none" /></svg> },
  { dot: 'w-4 bg-[#45453f]', icon: <span className="relative"><svg width="25" height="25" viewBox="0 0 24 24"><circle cx="12" cy="12" r="12" fill="#fbc116" /><path d="M12 6H22.400A12 12 0 0 0 1.600 6L7 15z" fill="#e33b2e" /><path d="M1.600 6A12 12 0 0 0 12 24l5.200-9L12 17.500 6.500 14.500z" fill="#2da44f" /><circle cx="12" cy="12" r="5.500" fill="#fff" /><circle cx="12" cy="12" r="4.300" fill="#3d7ff0" /></svg><Avatar className="absolute -top-[6px] -right-[5px] size-4" /></span> },
  { icon: <span className="flex size-6 items-center justify-center bg-white"><svg width="24" height="24" viewBox="0 0 24 24"><text x="11.500" y="15" fontSize="19" fontWeight="700" fill="#111" textAnchor="middle" fontFamily="Open Sans">a</text><path d="M2 17c6 5 13 4.500 18 1M17 16.500l4-.5-1 4" stroke="#f59a12" strokeWidth="2.400" fill="none" /></svg></span> },
  { icon: <Search size={17} strokeWidth={3} color="#1b74c5" /> },
  { icon: <span className="flex size-6 items-end justify-center rounded-full bg-[#0866ff]"><FaFacebookF size={19} color="#fff" /></span> },
  { icon: <svg width="26" height="26" viewBox="0 0 16 16" fill="none"><path d="M5 4V3a3 2.500 0 0 1 6 0v1" stroke="#222" /><path d="M1 4h14v11H1z" fill="#111" /><path d="M1 7h3.500v5H1z" fill="#e5352b" /><path d="M4.500 7H8v5H4.500z" fill="#1a76e0" /><path d="M8 7h3.500v5H8z" fill="#f5b400" /><path d="M11.500 7H15v5h-3.500z" fill="#4aa02c" /></svg> },
  { icon: <svg width="24" height="24" viewBox="0 0 24 24"><rect width="24" height="24" fill="#7d7d7d" /><rect y="4" width="24" height="16" rx="4" fill="#f7f7f7" /><path d="M9.500 8.500v7l6-3.500z" fill="#6b6b6b" /></svg> },
  { icon: <svg width="24" height="24" viewBox="0 0 24 24"><circle cx="12" cy="12" r="12" fill="#0a4da2" /><path d="M7 8.500h9M13 8v8" stroke="#fff" strokeWidth="1.500" /><circle cx="7" cy="8.500" r="2.500" fill="#fff" /><circle cx="16.500" cy="9.500" r="2.800" fill="#fff" /><circle cx="13" cy="17" r="2.300" fill="#fff" /></svg> },
  { dot: 'w-[6px] bg-[#84847c]', icon: <svg width="24" height="24" viewBox="0 0 24 24"><path d="M11 3h11v18H11z" fill="#fff" stroke="#1d7044" strokeWidth="1.400" /><path d="M14 6h7M14 9h7M14 12h7M14 15h7M14 18h7" stroke="#1d7044" strokeWidth="1.500" /><path d="M0 3l14-3v24L0 21z" fill="#1d7044" /><path d="M4 8l6 8M10 8l-6 8" stroke="#fff" strokeWidth="2" /></svg> },
  { dot: 'w-[6px] bg-[#84847c]', icon: <svg width="26" height="26" viewBox="0 0 26 26" fill="none"><rect x="1" y="0" width="17" height="18" fill="#f1f3f8" /><path d="M4 16V4h11" stroke="#d9380e" strokeWidth="3.500" strokeDasharray="3.200 1" /><path d="M15 6v13M8 16h12" stroke="#9aa4ae" strokeWidth="2.500" /><circle cx="22.500" cy="16" r="2.200" stroke="#1790d8" strokeWidth="1.600" /><circle cx="14.500" cy="22.500" r="2.200" stroke="#1790d8" strokeWidth="1.600" /></svg> },
];

function Taskbar() {
  return (
    <div className="flex h-12 items-center border-t border-[#c6c6bb] bg-linear-to-r from-[#eceadc] via-[#ebead3] to-[#deedf1] font-['Open_Sans'] text-[12px] leading-4 text-[#1b1b1b]">
      <div className="flex h-full w-[551px] items-center bg-linear-to-r from-[#eeecdb] via-[#e5ebe6] to-[#dfe8f0]">
        <span className="relative ml-[19px] h-[30px] w-[28px]">
          <svg width="25" height="17" viewBox="0 0 25 17" className="absolute bottom-0 left-0"><circle cx="18" cy="5" r="5" fill="#f3a33b" /><path d="M5 16a5 5 0 0 1 0-9.500A7.500 7.500 0 0 1 19 6a5 5 0 0 1 1 10z" fill="#9fc3f3" /><path d="M5 16a5 5 0 0 1-3-8c4 4 15 4 21 1a5 5 0 0 1-3 7z" fill="#7fb0ef" /></svg>
          <i className="absolute -top-[2px] left-[11px] size-4 rounded-full bg-[#c62b1c] text-center text-[11px] leading-4 text-white not-italic">3</i>
        </span>
        <span className="ml-[3px] -mt-px"><span className="tracking-[-0.300px]">14°C</span><br /><span className="tracking-[-0.200px] text-[#5c5c5c]">Stark bewölkt</span></span>
      </div>
      <div className="flex h-full items-center bg-linear-to-r from-[#dfe8f0] via-[#f0e8d0] via-12% to-[#ebead2]">
        <span className="grid grid-cols-2 gap-px">
          {[0, 1, 2, 3].map((i) => <i key={i} className="size-[11px] bg-linear-to-br from-[#2fb2f3] to-[#0078d7]" />)}
        </span>
        <span className="ml-[14px] flex h-[30px] w-[218px] items-center rounded-full border border-[#d8d6cc] bg-[#fafaf5] pl-[10px] text-[14px] text-[#5c5c5c]">
          <Search size={16} strokeWidth={2.200} color="#2b2b2b" className="mr-[9px]" /><span className="tracking-[-0.550px]">Cerca</span>
        </span>
        <div className="ml-[4px] flex">
          {dockApps.map((a, i) => (
            <span key={i} className="relative flex h-12 w-11 items-center justify-center">
              {i === 4 && <i className="absolute top-[4px] left-[3px] h-[39px] w-[38px] rounded bg-[#f8f7ef]" />}
              <span className="relative flex items-center">{a.icon}</span>
              {a.dot && <i className={`absolute bottom-[5px] left-1/2 h-[3px] -translate-x-1/2 rounded-full ${a.dot}`} />}
            </span>
          ))}
        </div>
      </div>
      <div className="ml-auto flex items-center pr-[19px]">
        <ChevronUp size={17} />
        <svg width="18" height="14" viewBox="0 0 18 14" className="ml-[14px]"><path d="M4 13a4 4 0 0 1 0-8 5.500 5.500 0 0 1 10-1 4.500 4.500 0 0 1 0 9z" fill="#0f6cc4" /><path d="M3 13l9-6 5 3a3.500 3.500 0 0 1-3 3z" fill="#2aa3ee" /></svg>
        <span className="ml-[20px] text-center tracking-[-0.200px]">ITA<br />IT</span>
        <svg width="16" height="16" viewBox="0 0 16 16" fill="none" stroke="#1b1b1b" strokeWidth="1.200" className="ml-[21px]"><path d="M9 2H1v10h10V8M6 12v3M3 15h6M13 8v7" /><rect x="11" y="1" width="4" height="6" rx="1" /></svg>
        <Volume2 size={16} strokeWidth={1.400} className="ml-[8px]" />
        <span className="ml-[18px] text-right tracking-[-0.200px]">11:40<br />25/09/2025</span>
      </div>
    </div>
  );
}

export default function App() {
  return (
    <div className="flex h-[1080px] w-[1920px] flex-col overflow-hidden bg-[#1a1c24] font-['Roboto',sans-serif]">
      <TabStrip />
      <AddressBar />
      <BookmarksBar />
      <WorkspaceHeader />
      <div className="flex h-[871px]">
        <ChatPane />
        <div className="h-[866px] w-[1452px] rounded-[5px] border border-[#3c4154]">
          <PreviewBar />
          <PreviewPage />
        </div>
      </div>
      <Taskbar />
    </div>
  );
}
